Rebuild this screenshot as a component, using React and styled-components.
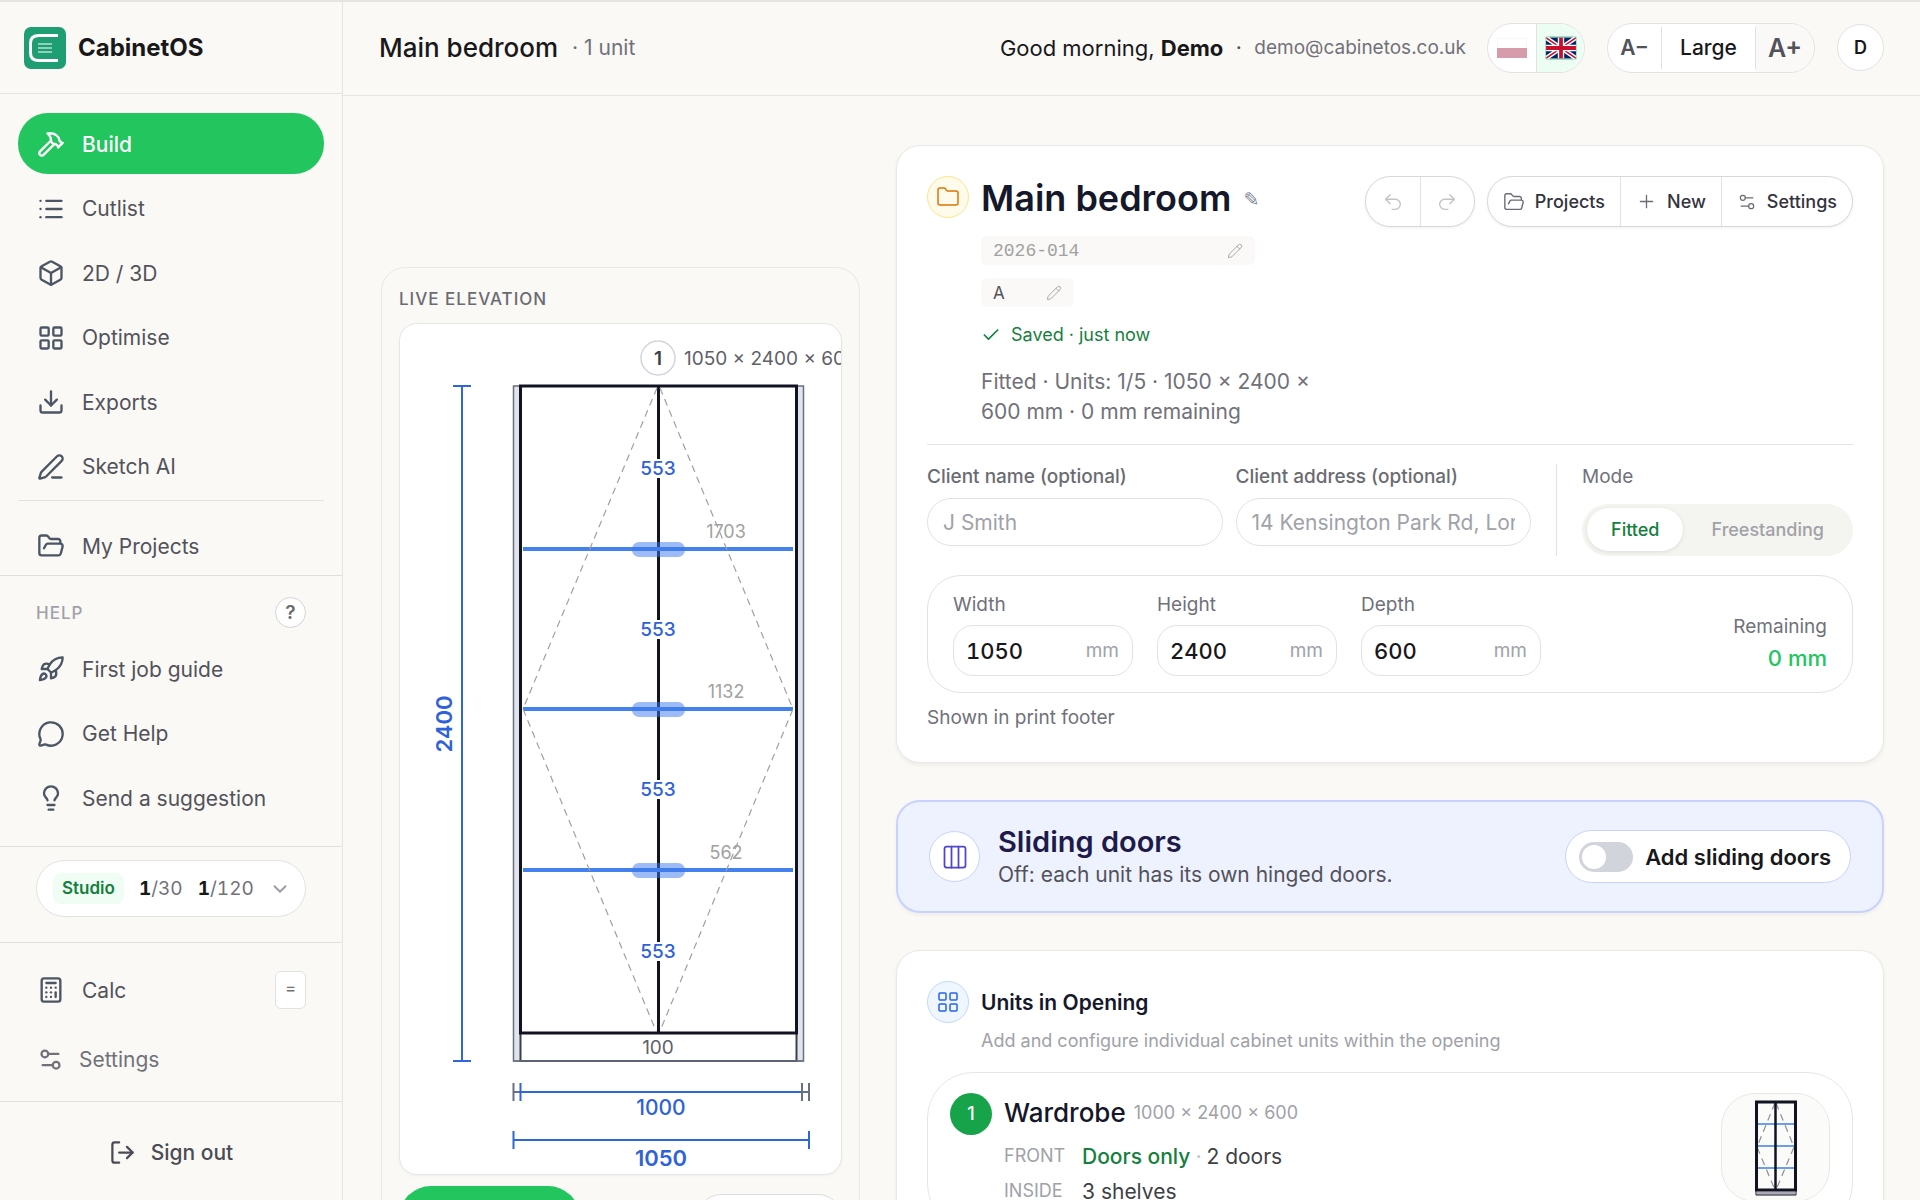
import { useState } from "react";
import styled, { createGlobalStyle, css } from "styled-components";
import {
  Hammer, List, Box, LayoutGrid, Download, PenLine, FolderOpen, Rocket,
  MessageCircle, Lightbulb, ChevronDown, Calculator, Settings2, LogOut,
  Folder, Undo2, Redo2, Plus, Pencil, Check, Columns3,
} from "lucide-react";

const mainLinks = [
  { label: "Build", icon: Hammer, active: true },
  { label: "Cutlist", icon: List },
  { label: "2D / 3D", icon: Box },
  { label: "Optimise", icon: LayoutGrid },
  { label: "Exports", icon: Download },
  { label: "Sketch AI", icon: PenLine },
];

const helpLinks = [
  { label: "First job guide", icon: Rocket },
  { label: "Get Help", icon: MessageCircle },
  { label: "Send a suggestion", icon: Lightbulb },
];

const NavLink = ({ label, icon: Icon, active }) => (
  <NavItem href="#" $active={active}>
    <Icon size={28} strokeWidth={2} />
    {label}
  </NavItem>
);

const Logo = () => (
  <svg width="42" height="42" viewBox="0 0 42 42" aria-hidden="true">
    <rect width="42" height="42" rx="7" fill="#1f9d73" />
    <path d="M34 8.5H15Q6.5 8.5 6.5 16V26Q6.5 33.5 15 33.5H34" fill="none" stroke="#fff" strokeWidth="3" />
    <path d="M14 17H28M14 21H28M14 25H28" stroke="#8fd0b8" strokeWidth="2" />
  </svg>
);

const FlagPL = () => (
  <svg width="30" height="20" viewBox="0 0 30 20" opacity="0.5">
    <rect width="30" height="20" fill="#f0f0f0" />
    <rect x="1" y="1" width="28" height="10" fill="#fff" />
    <rect y="10" width="30" height="10" fill="#b03a58" />
  </svg>
);

const FlagGB = () => (
  <svg width="32" height="24" viewBox="0 0 60 44" preserveAspectRatio="none">
    <rect width="60" height="44" rx="5" fill="#a9dcc0" />
    <rect x="2" y="3" width="56" height="38" fill="#012169" />
    <path d="M3 4L57 40M57 4L3 40" stroke="#fff" strokeWidth="8" />
    <path d="M3 4L57 40M57 4L3 40" stroke="#c8102e" strokeWidth="3" />
    <path d="M30 3V41M2 22H58" stroke="#fff" strokeWidth="12" />
    <path d="M30 3V41M2 22H58" stroke="#c8102e" strokeWidth="7" />
  </svg>
);

const shelves = [
  { y: 225, height: 1703 },
  { y: 385, height: 1132 },
  { y: 546, height: 562 },
];
const gaps = [144, 305, 465, 627];

const Elevation = () => (
  <ElevationSvg viewBox="0 0 441 850" role="img" aria-label="Live elevation">
    <g fill="none" stroke="#2f67d8" strokeWidth="2">
      <path d="M62 62V737M53 62H71M53 737H71" />
    </g>
    <text className="dim big" transform="translate(44 400) rotate(-90)">2400</text>

    <circle cx="258" cy="34" r="17" fill="#fff" stroke="#d1d5db" strokeWidth="1.5" />
    <text className="tag" x="258" y="34">1</text>
    <text className="size" x="284" y="34">1050 × 2400 × 600 mm</text>

    <rect x="113.5" y="62" width="290" height="675" fill="#e2e4ec" stroke="#6b7080" strokeWidth="1.5" />
    <rect x="120.5" y="62" width="276" height="675" fill="#fff" stroke="#3b3f4c" strokeWidth="2" />
    <rect x="120.5" y="62" width="276" height="647" fill="#fff" stroke="#111322" strokeWidth="3" />
    <path d="M113 737H404" stroke="#6b7080" strokeWidth="1.5" />
    <path d="M258.5 62V709" stroke="#111322" strokeWidth="3" />

    {shelves.map((s) => (
      <g key={s.y}>
        <rect x="123" y={s.y - 2} width="270" height="4" fill="#4382ec" />
        <rect x="232" y={s.y - 7} width="53" height="15" rx="7" fill="#3b78ee" opacity="0.5" />
        <text className="height" x="326" y={s.y - 18}>{s.height}</text>
      </g>
    ))}
    <g fill="none" stroke="#a0a0a0" strokeWidth="1.2" strokeDasharray="7 5">
      <path d="M257 64L123 385L256 707" />
      <path d="M260 64L393 385L260 707" />
    </g>
    {gaps.map((y) => (
      <g key={y}>
        <rect x="240" y={y - 9} width="37" height="19" fill="#fff" />
        <text className="gap" x="258" y={y}>553</text>
      </g>
    ))}
    <text className="plinth" x="258" y="723">100</text>

    <g fill="none" strokeWidth="2">
      <path d="M113.5 759V777M113.5 768H120M409 759V777M402 768H409" stroke="#6b7080" />
      <path d="M120.5 759V777M120.5 768H402" stroke="#2f67d8" />
      <path d="M402 759V777" stroke="#6b7080" />
      <path d="M113.5 807V825M409 807V825M113.5 816H409" stroke="#2f67d8" />
    </g>
    <text className="dim" x="261" y="783">1000</text>
    <text className="dim big" x="261" y="834">1050</text>
  </ElevationSvg>
);

const UnitThumb = () => (
  <svg width="42" height="96" viewBox="0 0 42 96" aria-hidden="true">
    <path d="M2 93H40" stroke="#a9aab6" strokeWidth="3" />
    <path d="M1 88V95H41V88" fill="none" stroke="#111322" strokeWidth="1" />
    <path d="M3 24H39M3 46H39M3 68H39" stroke="#3f7fe8" strokeWidth="1.5" />
    <path d="M20 3L2 47L20 90M21 3L39 47L21 90" fill="none" stroke="#8e8f96" strokeWidth="1.2" strokeDasharray="7 5" />
    <path d="M20.5 2V90" stroke="#111322" strokeWidth="2.5" />
    <rect x="1.5" y="2" width="39" height="88" fill="none" stroke="#111322" strokeWidth="3" />
  </svg>
);

const Dimension = ({ id, label, value }) => (
  <DimField>
    <label htmlFor={id}>{label}</label>
    <DimInput>
      <input id={id} defaultValue={value} inputMode="numeric" />
      <span>mm</span>
    </DimInput>
  </DimField>
);

const Sidebar = () => (
  <Aside>
    <Brand>
      <Logo />
      CabinetOS
    </Brand>
    <MainNav>
      <NavList $height={384}>
        {mainLinks.map((link) => <NavLink key={link.label} {...link} />)}
      </NavList>
      <NavRule />
      <NavLink label="My Projects" icon={FolderOpen} />
    </MainNav>
    <HelpNav>
      <HelpHead>
        Help
        <RoundHelp type="button">?</RoundHelp>
      </HelpHead>
      <NavList $height={190}>
        {helpLinks.map((link) => <NavLink key={link.label} {...link} />)}
      </NavList>
    </HelpNav>
    <PlanBox>
      <PlanButton type="button">
        <PlanName>Studio</PlanName>
        <span><b>1</b>/30</span>
        <span><b>1</b>/120</span>
        <ChevronDown size={22} />
      </PlanButton>
    </PlanBox>
    <Tools>
      <NavItem href="#">
        <Calculator size={28} />
        Calc
        <Key>=</Key>
      </NavItem>
      <NavItem href="#" $small>
        <Settings2 size={27} />
        Settings
      </NavItem>
    </Tools>
    <SignOut type="button">
      <LogOut size={27} />
      Sign out
    </SignOut>
  </Aside>
);

const Header = () => (
  <TopBar>
    <PageName>Main bedroom</PageName>
    <UnitCount>· 1 unit</UnitCount>
    <Greeting>Good morning, <b>Demo</b></Greeting>
    <Dot>·</Dot>
    <Email>demo@cabinetos.co.uk</Email>
    <Flags>
      <button type="button" aria-label="Polski"><FlagPL /></button>
      <button type="button" aria-label="English" className="on"><FlagGB /></button>
    </Flags>
    <TextSize>
      <button type="button">A−</button>
      <span>Large</span>
      <button type="button" className="plus">A+</button>
    </TextSize>
    <Avatar type="button">D</Avatar>
  </TopBar>
);

export default function App() {
  const [mode, setMode] = useState("Fitted");

  return (
    <>
      <GlobalStyle />
      <Shell>
        <Sidebar />
        <Page>
          <Header />
          <Content>
            <Preview>
              <PreviewTitle>Live elevation</PreviewTitle>
              <Canvas>
                <Elevation />
              </Canvas>
              <PreviewActions>
                <PrimaryAction type="button" aria-label="Open 3D view" />
                <SecondaryAction type="button" aria-label="Expand" />
              </PreviewActions>
            </Preview>

            <Column>
              <Card>
                <CardHead>
                  <IconCircle $tone="amber"><Folder size={24} strokeWidth={1.5} /></IconCircle>
                  <Summary>
                    <TitleRow>
                      <h1>Main bedroom</h1>
                      <button type="button" aria-label="Rename">✎</button>
                    </TitleRow>
                    <RefField $mono>
                      <input aria-label="Job number" defaultValue="2026-014" />
                      <Pencil size={16} strokeWidth={1.5} />
                    </RefField>
                    <RefField $short>
                      <input aria-label="Revision" defaultValue="A" />
                      <Pencil size={16} strokeWidth={1.5} />
                    </RefField>
                    <Saved><Check size={20} />Saved · just now</Saved>
                    <p>Fitted · Units: 1/5 · 1050 × 2400 × 600 mm · 0 mm remaining</p>
                  </Summary>
                  <Actions>
                    <ButtonGroup $muted>
                      <button type="button" aria-label="Undo"><Undo2 size={22} /></button>
                      <button type="button" aria-label="Redo"><Redo2 size={22} /></button>
                    </ButtonGroup>
                    <ButtonGroup>
                      <button type="button"><FolderOpen size={22} />Projects</button>
                      <button type="button"><Plus size={21} />New</button>
                      <button type="button"><Settings2 size={20} />Settings</button>
                    </ButtonGroup>
                  </Actions>
                </CardHead>

                <ClientRow>
                  <Field>
                    <label htmlFor="client">Client name (optional)</label>
                    <input id="client" placeholder="J Smith" />
                  </Field>
                  <Field>
                    <label htmlFor="address">Client address (optional)</label>
                    <input id="address" placeholder="14 Kensington Park Rd, London" />
                  </Field>
                  <ModeField>
                    <span>Mode</span>
                    <Segment>
                      {["Fitted", "Freestanding"].map((m) => (
                        <SegmentButton
                          key={m}
                          type="button"
                          $on={mode === m}
                          aria-pressed={mode === m}
                          onClick={() => setMode(m)}
                        >{m}</SegmentButton>
                      ))}
                    </Segment>
                  </ModeField>
                </ClientRow>

                <DimBox>
                  <Dimension id="width" label="Width" value="1050" />
                  <Dimension id="height" label="Height" value="2400" />
                  <Dimension id="depth" label="Depth" value="600" />
                  <Remaining>
                    Remaining
                    <b>0 mm</b>
                  </Remaining>
                </DimBox>
                <Note>Shown in print footer</Note>
              </Card>

              <DoorsCard>
                <IconCircle $tone="indigo"><Columns3 size={28} strokeWidth={1.5} /></IconCircle>
                <div>
                  <h2>Sliding doors</h2>
                  <p>Off: each unit has its own hinged doors.</p>
                </div>
                <SwitchLabel>
                  <Switch type="checkbox" />
                  Add sliding doors
                </SwitchLabel>
              </DoorsCard>

              <Card>
                <UnitsHead>
                  <IconCircle $tone="blue"><LayoutGrid size={24} strokeWidth={1.5} /></IconCircle>
                  <div>
                    <h2>Units in Opening</h2>
                    <p>Add and configure individual cabinet units within the opening</p>
                  </div>
                </UnitsHead>
                <Unit>
                  <UnitNumber>1</UnitNumber>
                  <UnitBody>
                    <UnitTitle>
                      <h3>Wardrobe</h3>
                      <span>1000 × 2400 × 600</span>
                    </UnitTitle>
                    <dl>
                      <dt>Front</dt>
                      <dd><em>Doors only</em><i>·</i>2 doors</dd>
                      <dt>Inside</dt>
                      <dd>3 shelves</dd>
                    </dl>
                  </UnitBody>
                  <Thumb><UnitThumb /></Thumb>
                </Unit>
              </Card>
            </Column>
          </Content>
        </Page>
      </Shell>
    </>
  );
}

const GlobalStyle = createGlobalStyle`
  * {
    box-sizing: border-box;
  }

  body {
    margin: 0;
    background: #faf9f5;
    color: #18181b;
    font-family: Inter, "Liberation Sans", sans-serif;
    font-size: 21px;
  }

  button, input {
    font: inherit;
    color: inherit;
    padding: 0;
    border: none;
    background: none;
    min-width: 0;
  }

  button {
    cursor: pointer;
  }

  h1, h2, h3, p, dl, dd {
    margin: 0;
  }

  svg {
    flex-shrink: 0;
  }
`

const Shell = styled.div`
  display: flex;
  height: 100vh;
  overflow: hidden;
  border-top: 2px solid #e6e5e1;
`

const Aside = styled.aside`
  width: 343px;
  flex-shrink: 0;
  display: flex;
  flex-direction: column;
  border-right: 1px solid #e5e5e2;
`

const Brand = styled.div`
  height: 92px;
  padding: 0 24px;
  display: flex;
  align-items: center;
  gap: 12px;
  font-size: 24px;
  font-weight: 700;
  border-bottom: 1px solid #e5e5e2;
`

const MainNav = styled.nav`
  padding: 19px 18px 0;
  height: 482px;
  border-bottom: 1px solid #dededc;
`

const NavList = styled.div`
  display: flex;
  flex-direction: column;
  justify-content: space-between;
  min-height: ${({ $height }) => $height}px;
`

const NavItem = styled.a`
  display: flex;
  align-items: center;
  gap: 17px;
  height: 61px;
  padding: 1px 18px 0 19px;
  border-radius: 30px;
  color: #52525b;
  text-decoration: none;

  svg {
    color: #4b5563;
  }

  ${({ $active }) => $active && css`
    background: #22c55e;
    color: #fff;
    font-weight: 500;

    svg {
      color: #fff;
    }
  `}

  ${({ $small }) => $small && css`
    gap: 15px;
    color: #71717a;

    svg {
      color: #71717a;
    }
  `}
`

const NavRule = styled.div`
  height: 1px;
  margin: 3px 0 14px;
  background: #e2e2de;
`

const HelpNav = styled.nav`
  padding: 21px 18px 0;
  height: 271px;
  border-bottom: 1px solid #e2e2de;
`

const HelpHead = styled.div`
  display: flex;
  align-items: center;
  justify-content: space-between;
  padding: 0 18px;
  margin-bottom: 10px;
  font-size: 17px;
  font-weight: 500;
  letter-spacing: 1px;
  text-transform: uppercase;
  color: #a1a1aa;
`

const RoundHelp = styled.button`
  width: 31px;
  height: 31px;
  border: 1px solid #d4d4d8;
  border-radius: 50%;
  background: #fff;
  color: #6b6b70;
  font-size: 19px;
  font-weight: 600;
  letter-spacing: 0;
`

const PlanBox = styled.div`
  padding: 13px 36px 25px;
  border-bottom: 1px solid #e2e2de;
`

const PlanButton = styled.button`
  display: flex;
  align-items: center;
  gap: 15px;
  width: 100%;
  height: 57px;
  padding: 0 16px;
  border: 1px solid #e2e2e2;
  border-radius: 29px;
  background: #fff;
  color: #71717a;
  font-size: 19px;
  font-variant-numeric: tabular-nums;

  b {
    color: #18181b;
    font-weight: 700;
  }

  svg {
    margin-left: auto;
    color: #9a9aa2;
  }
`

const PlanName = styled.span`
  padding: 4px 9px;
  border-radius: 8px;
  background: #f0fdf4;
  color: #15803d;
  font-size: 17px;
  line-height: 23px;
  font-weight: 600;
`

const Tools = styled.div`
  padding: 16px 18px 12px;
  display: flex;
  flex-direction: column;
  gap: 8px;
  border-bottom: 1px solid #e2e2de;
`

const Key = styled.kbd`
  display: flex;
  justify-content: center;
  align-items: center;
  width: 31px;
  height: 38px;
  margin-left: auto;
  padding-bottom: 5px;
  border: 1px solid #e2e2e2;
  border-radius: 6px;
  background: #fff;
  color: #71717a;
  font-family: inherit;
  font-size: 17px;
`

const SignOut = styled.button`
  flex: 1;
  display: flex;
  align-items: center;
  justify-content: center;
  gap: 15px;
  padding-top: 2px;
  color: #4b4b55;
  font-weight: 500;
`

const Page = styled.div`
  flex: 1;
  min-width: 0;
  display: flex;
  flex-direction: column;
`

const TopBar = styled.header`
  display: flex;
  align-items: center;
  height: 94px;
  flex-shrink: 0;
  padding: 0 36px 2px;
  border-bottom: 1px solid #e5e5e2;
`

const PageName = styled.div`
  font-size: 26px;
  font-weight: 500;
`

const UnitCount = styled.div`
  margin: 0 auto 0 14px;
  color: #71717a;
`

const Greeting = styled.div`
  font-size: 22px;
`

const Dot = styled.span`
  width: 31px;
  text-align: center;
  color: #52525b;
`

const Email = styled.div`
  font-size: 19px;
  color: #71717a;
`

const Flags = styled.div`
  display: flex;
  height: 50px;
  margin-left: 21px;
  border: 1px solid #e2e2e2;
  border-radius: 25px;
  background: #fff;
  overflow: hidden;

  button {
    width: 48px;
    display: flex;
    align-items: center;
    justify-content: center;
  }

  .on {
    background: #ecfdf3;
    border-left: 1px solid #e2e2e2;
  }
`

const TextSize = styled.div`
  display: flex;
  align-items: center;
  height: 50px;
  margin: 0 22px;
  border: 1px solid #e2e2e2;
  border-radius: 25px;
  background: #fff;
  overflow: hidden;
  font-weight: 500;

  button {
    width: 53px;
    height: 100%;
    color: #52525b;
    font-weight: 600;
  }

  .plus {
    width: 58px;
    background: #faf9f7;
    font-size: 25px;
  }

  span {
    width: 95px;
    line-height: 42px;
    text-align: center;
    border: solid #e2e2e2;
    border-width: 0 1px;
  }
`

const Avatar = styled.button`
  width: 47px;
  height: 47px;
  border: 1px solid #e2e2e2;
  border-radius: 50%;
  background: #fff;
  font-size: 18px;
  font-weight: 600;
`

const Content = styled.main`
  flex: 1;
  min-height: 0;
  display: grid;
  grid-template-columns: 479px minmax(0, 1fr);
  gap: 36px;
  padding: 49px 36px 0 38px;
  overflow-y: auto;
  scrollbar-width: none;
`

const Preview = styled.section`
  align-self: start;
  margin-top: 122px;
  padding: 19px 17px;
  border: 1px solid #e8e8e4;
  border-radius: 24px;
`

const PreviewTitle = styled.h2`
  margin-bottom: 12px;
  font-size: 17px;
  line-height: 24px;
  font-weight: 500;
  letter-spacing: 1px;
  text-transform: uppercase;
  color: #6b6b72;
`

const Canvas = styled.div`
  border: 1px solid #e6e6e6;
  border-radius: 18px;
  background: #fff;
  overflow: hidden;
  box-shadow: 0 1px 3px #0000000a;
`

const ElevationSvg = styled.svg`
  display: block;
  width: 100%;

  text {
    dominant-baseline: central;
    text-anchor: middle;
    font-size: 19px;
  }

  .tag {
    font-weight: 600;
    fill: #3f3f4a;
  }

  .size {
    text-anchor: start;
    fill: #5f6068;
  }

  .height {
    font-size: 18px;
    fill: #a1a1a1;
  }

  .gap {
    font-weight: 500;
    fill: #2f62d8;
  }

  .plinth {
    fill: #5f6068;
  }

  .dim {
    font-size: 21px;
    font-weight: 500;
    fill: #2f62d8;
  }

  .big {
    font-size: 22px;
    font-weight: 600;
  }
`

const PreviewActions = styled.div`
  display: flex;
  justify-content: space-between;
  align-items: center;
  padding-top: 11px;
`

const PrimaryAction = styled.button`
  width: 181px;
  height: 64px;
  border-radius: 32px;
  background: #22c55e;
`

const SecondaryAction = styled.button`
  width: 145px;
  height: 48px;
  border: 1px solid #dcdce0;
  border-radius: 24px;
  background: #fff;
`

const Column = styled.div`
  display: flex;
  flex-direction: column;
  gap: 37px;
`

const Card = styled.section`
  padding: 30px;
  border: 1px solid #e8e8e5;
  border-radius: 24px;
  background: #fff;
  box-shadow: 0 2px 4px #0000000f;
`

const tones = {
  amber: css`background: #fffbeb; border-color: #fde68a; color: #d97706;`,
  blue: css`background: #eff6ff; border-color: #bfdbfe; color: #2563eb;`,
  indigo: css`background: #fff; border-color: #c7d2fe; color: #4f46c8; width: 51px; height: 51px;`,
}

const IconCircle = styled.div`
  flex-shrink: 0;
  display: flex;
  align-items: center;
  justify-content: center;
  width: 42px;
  height: 42px;
  border: 1px solid;
  border-radius: 50%;
  ${({ $tone }) => tones[$tone]}
`

const CardHead = styled.div`
  display: flex;
  align-items: flex-start;
  gap: 12px;
  padding-bottom: 17px;
  border-bottom: 1px solid #e5e5e2;
`

const Summary = styled.div`
  width: 340px;

  p {
    margin-top: 17px;
    line-height: 30px;
    color: #71717a;
  }
`

const TitleRow = styled.div`
  display: flex;
  align-items: center;
  gap: 12px;
  margin-bottom: 15px;

  h1 {
    font-size: 36px;
    line-height: 45px;
    font-weight: 600;
    color: #15172a;
    white-space: nowrap;
  }

  button {
    color: #85879a;
    font-size: 19px;
    font-weight: 700;
    font-family: "DejaVu Sans", sans-serif;
  }
`

const RefField = styled.div`
  display: flex;
  align-items: center;
  width: ${({ $short }) => ($short ? "93px" : "274px")};
  height: 29px;
  margin-bottom: 13px;
  padding: 0 12px;
  border-radius: 6px;
  background: #faf9f7;
  font-size: 17px;
  color: #52525b;

  ${({ $mono }) => $mono && css`
    font-family: "Liberation Mono", monospace;
    font-size: 18px;
    color: #a1a1a1;
  `}

  input {
    flex: 1;
    width: 0;
  }

  svg {
    color: #a8a8a8;
  }
`

const Saved = styled.div`
  display: flex;
  align-items: center;
  gap: 10px;
  font-size: 18px;
  line-height: 30px;
  color: #15803d;
`

const Actions = styled.div`
  display: flex;
  gap: 12px;
  margin-left: auto;
`

const ButtonGroup = styled.div`
  display: flex;
  height: 51px;
  border: 1px solid #d8d8dc;
  border-radius: 26px;
  background: #fff;
  overflow: hidden;
  box-shadow: 0 1px 3px #00000012;

  button {
    display: flex;
    align-items: center;
    justify-content: center;
    gap: 10px;
    min-width: 54px;
    padding: 0 15px;
    font-size: 18px;
    font-weight: 500;
    color: #33333d;
  }

  button + button {
    border-left: 1px solid #e2e2e4;
  }

  svg {
    color: #6b6b75;
    stroke-width: 1.5;
  }

  ${({ $muted }) => $muted && css`
    svg {
      color: #c3c3c6;
    }
  `}
`

const ClientRow = styled.div`
  display: grid;
  grid-template-columns: 1fr 1fr auto;
  gap: 13px;
  padding-top: 19px;
`

const Field = styled.div`
  padding-top: 1px;

  label {
    display: block;
    font-size: 19px;
    line-height: 23px;
    font-weight: 500;
    color: #6b6b72;
  }

  input {
    width: 100%;
    height: 48px;
    margin-top: 10px;
    padding: 0 15px;
    border: 1px solid #e2e2e2;
    border-radius: 24px;
  }

  input::placeholder {
    color: #a1a1aa;
  }
`

const ModeField = styled.div`
  margin-left: 12px;
  padding: 1px 0 0 25px;
  border-left: 1px solid #e2e2e2;
  font-size: 19px;
  line-height: 23px;
  color: #71717a;
`

const Segment = styled.div`
  display: flex;
  gap: 4px;
  height: 52px;
  margin-top: 16px;
  padding: 4px 5px;
  border-radius: 26px;
  background: #f4f4f0;
`

const SegmentButton = styled.button`
  height: 43px;
  padding: 0 24px;
  border-radius: 22px;
  font-size: 18px;
  font-weight: 500;
  color: #a1a1a8;

  ${({ $on }) => $on && css`
    background: #fff;
    color: #15803d;
    box-shadow: 0 1px 4px #0000001a;
  `}
`

const DimBox = styled.div`
  display: flex;
  gap: 24px;
  margin-top: 19px;
  padding: 17px 25px 16px;
  border: 1px solid #e2e2e2;
  border-radius: 34px;
`

const DimField = styled.div`
  width: 180px;
  font-size: 19px;
  line-height: 24px;
  color: #71717a;

  label {
    display: block;
    margin-bottom: 8px;
  }
`

const DimInput = styled.div`
  display: flex;
  align-items: center;
  height: 51px;
  padding: 0 13px 0 12px;
  border: 1px solid #e2e2e2;
  border-radius: 20px;

  input {
    flex: 1;
    width: 0;
    font-size: 22px;
    font-weight: 500;
    font-variant-numeric: tabular-nums;
    color: #18181b;
  }

  span {
    color: #a1a1aa;
  }
`

const Remaining = styled.div`
  display: flex;
  flex-direction: column;
  justify-content: flex-end;
  gap: 5px;
  margin-left: auto;
  padding-bottom: 4px;
  text-align: right;
  font-size: 19px;
  line-height: 27px;
  color: #71717a;

  b {
    font-size: 22px;
    font-weight: 500;
    color: #22c55e;
  }
`

const Note = styled.p`
  margin-top: 13px;
  padding-bottom: 2px;
  font-size: 19px;
  line-height: 24px;
  color: #71717a;
`

const DoorsCard = styled.section`
  display: flex;
  align-items: center;
  gap: 18px;
  height: 113px;
  padding: 0 31px;
  border: 2px solid #c7d2fe;
  border-radius: 24px;
  background: #eef2ff;
  box-shadow: 0 2px 4px #0000000d;

  h2 {
    font-size: 29px;
    line-height: 36px;
    font-weight: 600;
    color: #1e1b4b;
  }

  p {
    line-height: 30px;
    color: #52525b;
  }
`

const SwitchLabel = styled.label`
  display: flex;
  align-items: center;
  gap: 12px;
  height: 53px;
  margin-left: auto;
  padding: 0 19px 0 13px;
  border: 1px solid #c7d2fe;
  border-radius: 27px;
  background: #fff;
  font-size: 22px;
  font-weight: 600;
`

const Switch = styled.input`
  appearance: none;
  display: flex;
  align-items: center;
  width: 54px;
  height: 30px;
  margin: 0;
  padding: 0 3px;
  border-radius: 15px;
  background: #d1d5db;

  &::before {
    content: "";
    width: 24px;
    height: 24px;
    border-radius: 50%;
    background: #fff;
  }

  &:checked {
    justify-content: flex-end;
    background: #22c55e;
  }
`

const UnitsHead = styled.div`
  display: flex;
  gap: 12px;

  h2 {
    margin: 7px 0 6px;
    font-size: 21px;
    line-height: 30px;
    font-weight: 600;
    color: #15172a;
  }

  p {
    font-size: 18px;
    line-height: 34px;
    color: #a1a1a8;
  }
`

const Unit = styled.article`
  display: flex;
  align-items: flex-start;
  margin-top: 14px;
  padding: 20px 22px;
  border: 1px solid #e6e6e6;
  border-radius: 46px;
`

const UnitNumber = styled.div`
  width: 42px;
  height: 42px;
  margin-right: 12px;
  border-radius: 50%;
  background: #16a34a;
  color: #fff;
  font-size: 18px;
  font-weight: 500;
  line-height: 42px;
  text-align: center;
`

const UnitBody = styled.div`
  dl {
    display: grid;
    grid-template-columns: 78px auto;
    line-height: 35px;
  }

  dt {
    font-size: 18px;
    line-height: 33px;
    text-transform: uppercase;
    color: #a1a1a8;
  }

  dd {
    color: #3f3f46;
  }

  em {
    font-style: normal;
    font-weight: 500;
    color: #15803d;
  }

  i {
    margin: 0 5px;
    color: #c3c3c6;
  }
`

const UnitTitle = styled.div`
  display: flex;
  align-items: center;
  gap: 8px;
  line-height: 40px;
  margin-bottom: 6px;

  h3 {
    font-size: 26px;
    font-weight: 500;
    color: #15172a;
  }

  span {
    font-size: 18px;
    color: #a1a1a8;
  }
`

const Thumb = styled.div`
  display: flex;
  justify-content: center;
  width: 109px;
  height: 109px;
  margin-left: auto;
  padding-top: 6px;
  border: 1px solid #e8e8e4;
  border-radius: 34px;
  background: #fbfbf9;
`
